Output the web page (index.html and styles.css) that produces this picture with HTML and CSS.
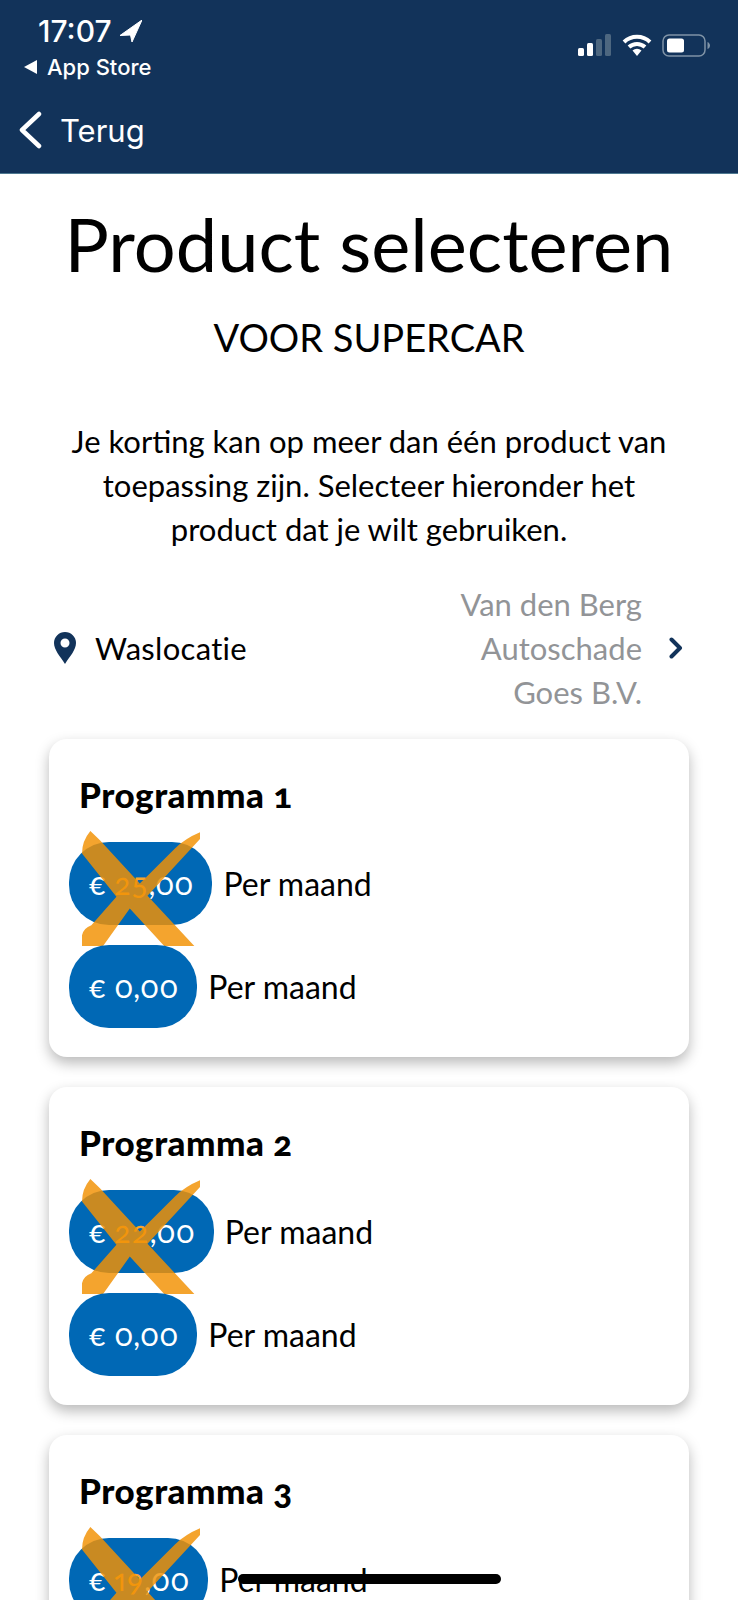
FILE: index.html
```html
<!DOCTYPE html>
<html lang="nl">
<head>
    <meta charset="UTF-8">
    <meta name="viewport" content="width=device-width, initial-scale=1.0">
    <title>Product selecteren</title>
    <link rel="stylesheet" href="styles.css">
</head>
<body>
<header class="top-bar">
    <div class="status-bar">
        <div class="status-left">
            <div class="clock">17:07
                <svg class="arrow-icon" viewBox="0 0 22 22"><path d="M22 0 0 15.500 10.500 15 12 22z" fill="#fff" stroke="#fff" stroke-linejoin="round"/></svg>
            </div>
            <div class="back-app">
                <svg class="back-app-icon" viewBox="0 0 14 14"><path d="M13 0v14L0 7z" fill="#fff"/></svg>
                App Store
            </div>
        </div>
        <div class="status-right">
            <svg class="signal-icon" viewBox="0 0 34 22">
                <rect x="0" y="14" width="6" height="8" rx="1.5" fill="#fff"/>
                <rect x="9" y="9" width="6" height="13" rx="1.5" fill="#fff"/>
                <rect x="18" y="5" width="6" height="17" rx="1.5" fill="#4d6780"/>
                <rect x="27" y="0" width="6" height="22" rx="1.5" fill="#4d6780"/>
            </svg>
            <svg class="wifi-icon" viewBox="0 0 30 22">
                <path d="M2 8a19 19 0 0 1 26 0M7 13a12 12 0 0 1 16 0" fill="none" stroke="#fff" stroke-width="4"/>
                <path d="M10.500 16.500a7 7 0 0 1 9 0L15 22z" fill="#fff"/>
            </svg>
            <svg class="battery-icon" viewBox="0 0 48 23">
                <rect x="1" y="1" width="42" height="21" rx="6" fill="none" stroke="#7f93a6" stroke-width="1.500"/>
                <rect x="5" y="4.500" width="17" height="14" rx="2.500" fill="#fff"/>
                <path d="M45.500 8v7c1.500-.5 2.500-2 2.500-3.500S47 8.500 45.500 8z" fill="#7f93a6"/>
            </svg>
        </div>
    </div>
    <div class="nav-bar">
        <svg class="nav-back-icon" viewBox="0 0 24 38"><path d="M21 3 4 19l17 16" fill="none" stroke="#fff" stroke-width="4.500" stroke-linecap="round" stroke-linejoin="round"/></svg>
        <span>Terug</span>
    </div>
</header>

<main>
    <h1>Product selecteren</h1>
    <h2>VOOR SUPERCAR</h2>
    <p class="intro">Je korting kan op meer dan één product van<br>toepassing zijn. Selecteer hieronder het<br>product dat je wilt gebruiken.</p>

    <div class="location-row">
        <svg class="pin-icon" viewBox="0 0 22 32"><path fill-rule="evenodd" d="M11 0a11 11 0 0 1 11 11c0 7-6 13-11 21C6 24 0 18 0 11A11 11 0 0 1 11 0zm0 6.500a4.500 4.500 0 1 0 0 9 4.500 4.500 0 0 0 0-9z" fill="#12335a"/></svg>
        <span class="location-label">Waslocatie</span>
        <span class="location-name">Van den Berg<br>Autoschade<br>Goes B.V.</span>
        <svg class="chevron-icon" viewBox="0 0 14 22"><path d="M2.500 2.500 11 11l-8.500 8.500" fill="none" stroke="#12335a" stroke-width="4" stroke-linecap="round" stroke-linejoin="round"/></svg>
    </div>

    <section class="card">
        <h3>Programma 1</h3>
        <div class="price-row">
            <span class="pill">€ <span class="old-amount">25</span>,00</span>
            <span>Per maand</span>
            <svg class="cross" viewBox="0 0 353 344"><use href="#cross-shape"/></svg>
        </div>
        <div class="price-row">
            <span class="pill">€ 0,00</span>
            <span>Per maand</span>
        </div>
    </section>

    <section class="card">
        <h3>Programma 2</h3>
        <div class="price-row">
            <span class="pill">€ <span class="old-amount">22</span>,00</span>
            <span>Per maand</span>
            <svg class="cross" viewBox="0 0 353 344"><use href="#cross-shape"/></svg>
        </div>
        <div class="price-row">
            <span class="pill">€ 0,00</span>
            <span>Per maand</span>
        </div>
    </section>

    <section class="card">
        <h3>Programma 3</h3>
        <div class="price-row">
            <span class="pill">€ <span class="old-amount">19</span>,00</span>
            <span>Per maand</span>
            <svg class="cross" viewBox="0 0 353 344"><use href="#cross-shape"/></svg>
        </div>
    </section>
</main>

<div class="home-indicator"></div>

<svg class="defs" width="0" height="0">
    <defs>
        <path id="cross-shape" d="M25 0 53 27 173 157 278 52Q310 22 353 4V24L196 194 336 344H246L143 232 63 344H0V312Q5 290 28 282L103 197 0 67Q0 30 25 0z"/>
    </defs>
</svg>
</body>
</html>
```

FILE: styles.css
```css
body {
    font-family: Lato, sans-serif;
    background-color: #fff;
    margin: 0;
    padding: 0;
    color: #000;
    height: 1600px;
    overflow: hidden;
}

.top-bar {
    background-color: #12335a;
    height: 174px;
    box-sizing: border-box;
    border-bottom: 1px solid #4d7890;
    color: #fff;
}

.status-bar {
    display: flex;
    justify-content: space-between;
    height: 100px;
}

.status-left {
    padding: 14px 0 0 24px;
}

.clock {
    font-family: Inter, sans-serif;
    font-size: 30px;
    font-weight: 500;
    line-height: 34px;
    margin-left: 14px;
    display: flex;
    align-items: center;
    gap: 8px;
}

.arrow-icon {
    width: 22px;
    height: 22px;
}

.back-app {
    font-family: Inter, sans-serif;
    font-size: 22px;
    font-weight: 500;
    line-height: 30px;
    margin-top: 4px;
    display: flex;
    align-items: center;
    gap: 9px;
}

.back-app-icon {
    width: 14px;
    height: 14px;
}

.status-right {
    display: flex;
    align-items: flex-start;
    gap: 10px;
    padding: 34px 28px 0 0;
}

.signal-icon {
    width: 34px;
    height: 22px;
}

.wifi-icon {
    width: 30px;
    height: 22px;
}

.battery-icon {
    width: 48px;
    height: 23px;
}

.nav-bar {
    display: flex;
    align-items: center;
    gap: 18px;
    padding-left: 18px;
    font-family: Inter, sans-serif;
    font-size: 31px;
    height: 60px;
}

.nav-back-icon {
    width: 24px;
    height: 38px;
}

h1 {
    font-size: 74px;
    font-weight: 400;
    line-height: 88px;
    margin: 26px 0 0;
    text-align: center;
}

h2 {
    font-size: 38px;
    font-weight: 400;
    line-height: 46px;
    margin: 26px 0 0;
    text-align: center;
}

.intro {
    font-size: 31px;
    line-height: 44px;
    margin: 59px 0 0;
    text-align: center;
}

.location-row {
    display: flex;
    align-items: center;
    margin: 31px 55px 0 54px;
    font-size: 31px;
    line-height: 44px;
}

.pin-icon {
    width: 22px;
    height: 32px;
    margin-right: 19px;
}

.location-label {
    flex: 1;
    letter-spacing: 0.3px;
}

.location-name {
    color: #929497;
    text-align: right;
    margin-right: 27px;
}

.chevron-icon {
    width: 14px;
    height: 22px;
}

.card {
    background-color: #fff;
    border-radius: 18px;
    box-shadow: 0 6px 14px rgba(0, 0, 0, 0.28);
    margin: 25px 49px 30px;
    padding: 33px 20px 0;
    height: 318px;
    box-sizing: border-box;
}

h3 {
    font-size: 35px;
    font-weight: 900;
    line-height: 44px;
    margin: 0 0 26px 10px;
    letter-spacing: 0.5px;
    font-variant-numeric: oldstyle-nums;
}

.price-row {
    position: relative;
    display: flex;
    align-items: center;
    gap: 11px;
    font-size: 32px;
    margin-bottom: 20px;
}

.pill {
    display: block;
    background-color: #0068b5;
    color: #fff;
    border-radius: 40px;
    font-size: 30px;
    line-height: 83px;
    padding: 0 19px;
    font-variant-numeric: oldstyle-nums proportional-nums;
}

.old-amount {
    color: #f5a52f;
    letter-spacing: 1.5px;
}

.cross {
    position: absolute;
    left: 13px;
    top: -11px;
    width: 118px;
    height: 115px;
    fill: #f29205;
    opacity: 0.83;
}

.home-indicator {
    position: absolute;
    left: 238px;
    top: 1574px;
    width: 263px;
    height: 10px;
    border-radius: 5px;
    background-color: #000;
}

.defs {
    position: absolute;
}
```
